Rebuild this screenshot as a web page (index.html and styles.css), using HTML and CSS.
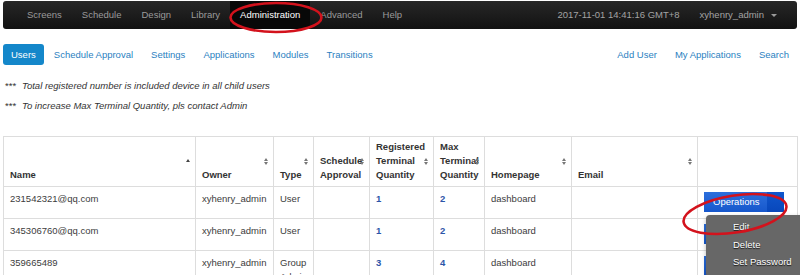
FILE: index.html
```html
<!DOCTYPE html>
<html>
<head>
<meta charset="utf-8">
<title>Users</title>
<link rel="stylesheet" href="styles.css">
</head>
<body>
<div class="page">
  <header class="navbar">
    <ul class="nav">
      <li><a>Screens</a></li>
      <li><a>Schedule</a></li>
      <li><a>Design</a></li>
      <li><a>Library</a></li>
      <li class="active"><a>Administration</a></li>
      <li><a>Advanced</a></li>
      <li><a>Help</a></li>
    </ul>
    <div class="nav-right">
      <span class="clock">2017-11-01 14:41:16 GMT+8</span>
      <a class="user">xyhenry_admin<b class="caret"></b></a>
    </div>
  </header>

  <nav class="subnav">
    <ul class="pills">
      <li class="active"><a>Users</a></li>
      <li><a>Schedule Approval</a></li>
      <li><a>Settings</a></li>
      <li><a>Applications</a></li>
      <li><a>Modules</a></li>
      <li><a>Transitions</a></li>
    </ul>
    <ul class="pills">
      <li><a>Add User</a></li>
      <li><a>My Applications</a></li>
      <li><a>Search</a></li>
    </ul>
  </nav>

  <div class="notes">
    <p><span class="stars">***</span><em>Total registered number is included device in all child users</em></p>
    <p><span class="stars">***</span><em>To increase Max Terminal Quantity, pls contact Admin</em></p>
  </div>

  <table class="grid">
    <colgroup>
      <col class="c-name"><col class="c-owner"><col class="c-type"><col class="c-appr">
      <col class="c-reg"><col class="c-max"><col class="c-home"><col class="c-email"><col class="c-ops">
    </colgroup>
    <thead>
      <tr>
        <th class="sort-asc">Name</th>
        <th class="sort">Owner</th>
        <th class="sort">Type</th>
        <th class="sort">Schedule Approval</th>
        <th class="sort">Registered Terminal Quantity</th>
        <th class="sort">Max Terminal Quantity</th>
        <th class="sort">Homepage</th>
        <th class="sort">Email</th>
        <th></th>
      </tr>
    </thead>
    <tbody>
      <tr>
        <td>231542321@qq.com</td>
        <td>xyhenry_admin</td>
        <td>User</td>
        <td></td>
        <td><a class="num">1</a></td>
        <td><a class="num">2</a></td>
        <td>dashboard</td>
        <td></td>
        <td class="ops">
          <div class="btn-group">
            <span class="btn">Operations</span><span class="btn btn-caret"></span>
            <ul class="menu">
              <li>Edit</li>
              <li>Delete</li>
              <li>Set Password</li>
            </ul>
          </div>
        </td>
      </tr>
      <tr>
        <td>345306760@qq.com</td>
        <td>xyhenry_admin</td>
        <td>User</td>
        <td></td>
        <td><a class="num">1</a></td>
        <td><a class="num">2</a></td>
        <td>dashboard</td>
        <td></td>
        <td class="ops"><div class="btn-group" aria-label="Operations"><span class="btn btn-blank"></span><span class="btn btn-caret"></span></div></td>
      </tr>
      <tr>
        <td>359665489</td>
        <td>xyhenry_admin</td>
        <td>Group Admin</td>
        <td></td>
        <td><a class="num">3</a></td>
        <td><a class="num">4</a></td>
        <td>dashboard</td>
        <td></td>
        <td class="ops"><div class="btn-group" aria-label="Operations"><span class="btn btn-blank"></span><span class="btn btn-caret"></span></div></td>
      </tr>
    </tbody>
  </table>
</div>

<svg class="marks" width="800" height="275" viewBox="0 0 800 275">
  <ellipse cx="276" cy="17.5" rx="45.5" ry="14.5" fill="none" stroke="#d3121c" stroke-width="2.6"/>
  <ellipse cx="735" cy="214" rx="52" ry="18.5" transform="rotate(-9 735 214)" fill="none" stroke="#d3121c" stroke-width="2.6"/>
</svg>
</body>
</html>
```

FILE: styles.css
```css
html, body {
  margin: 0;
  overflow: hidden;
  background: #fff;
}

body {
  font-family: "Liberation Sans", Arial, sans-serif;
  font-size: 9.5px;
  color: #333;
  position: relative;
}

.page {
  padding: 1px 3px 0;
}

/* top navbar */
.navbar {
  display: flex;
  justify-content: space-between;
  height: 28px;
  padding: 0 10px 0 14px;
  background: linear-gradient(#272727, #121212);
  border-radius: 3px;
}

.nav {
  display: flex;
  list-style: none;
  margin: 0;
  padding: 0;
}

.nav a {
  display: block;
  padding: 0 10px;
  line-height: 28px;
  color: #9a9a9a;
}

.nav .active a {
  background: #080808;
  color: #fff;
}

.nav-right {
  display: flex;
}

.clock,
.user {
  padding: 0 10px;
  line-height: 28px;
  color: #a3a3a3;
}

.caret {
  display: inline-block;
  margin-left: 7px;
  vertical-align: middle;
  border-top: 3px solid #9a9a9a;
  border-left: 3px solid transparent;
  border-right: 3px solid transparent;
}

/* sub navigation pills */
.subnav {
  display: flex;
  justify-content: space-between;
  margin-top: 15px;
}

.pills {
  display: flex;
  gap: 2px;
  list-style: none;
  margin: 0;
  padding: 0;
}

.pills a {
  display: block;
  padding: 0 8px;
  line-height: 21px;
  border-radius: 3px;
  color: #2b7fbf;
}

.pills .active a {
  background: #1487ca;
  color: #fff;
}

/* notes */
.notes {
  margin-top: 14px;
  display: flex;
  flex-direction: column;
  gap: 6px;
}

.notes p {
  margin: 0;
  line-height: 14px;
  color: #333;
}

.stars {
  display: inline-block;
  width: 17px;
  padding-left: 2px;
}

.notes em {
  font-style: italic;
}

/* table */
.grid {
  margin-top: 23px;
  width: 794px;
  table-layout: fixed;
  border-collapse: collapse;
  border: 1px solid #ddd;
}

.c-name { width: 192px; }
.c-owner { width: 78px; }
.c-type { width: 40px; }
.c-appr { width: 56px; }
.c-reg { width: 64px; }
.c-max { width: 51px; }
.c-home { width: 87px; }
.c-email { width: 126px; }
.c-ops { width: 100px; }

.grid th,
.grid td {
  border: 1px solid #ddd;
  text-align: left;
  line-height: 14px;
}

.grid th {
  position: relative;
  vertical-align: bottom;
  padding: 3px 6px 4px;
  font-weight: bold;
  color: #333;
}

.grid td {
  vertical-align: top;
  padding: 5px 6px 6px;
  color: #3c3c3c;
}

.grid th.sort::before,
.grid th.sort::after,
.grid th.sort-asc::before {
  content: "";
  position: absolute;
  right: 5px;
  border-left: 2.5px solid transparent;
  border-right: 2.5px solid transparent;
}

.grid th.sort::before,
.grid th.sort-asc::before {
  top: 50%;
  margin-top: -4px;
  border-bottom: 3px solid #777;
}

.grid th.sort::after {
  top: 50%;
  margin-top: 0;
  border-top: 3px solid #777;
}

.grid th.sort-asc::before {
  border-bottom-color: #444;
  margin-top: -3px;
}

.num {
  font-weight: bold;
  color: #2c55a8;
}

.grid td.ops {
  text-align: right;
  padding-right: 13px;
}

.btn-group {
  position: relative;
  display: inline-flex;
  height: 20px;
  vertical-align: top;
}

.btn {
  display: block;
  height: 20px;
  line-height: 20px;
  padding: 0 8px 0 9px;
  color: #fff;
  background: linear-gradient(#2c6fdc, #1657cc);
}

.btn-blank {
  width: 64px;
  padding: 0;
}

.btn-caret {
  width: 17px;
  padding: 0;
  background: linear-gradient(#1056cc, #0847bb);
}

.menu {
  position: absolute;
  top: 23px;
  left: 2px;
  z-index: 5;
  width: 112px;
  margin: 0;
  padding: 3px 0 6px;
  list-style: none;
  text-align: left;
  background: #676767;
  border-radius: 4px 0 0 4px;
  box-shadow: 0 2px 4px rgba(0, 0, 0, 0.3);
}

.menu li {
  padding: 0 8px 0 27px;
  line-height: 17.5px;
  color: #fff;
  text-shadow: 0 1px 1px #111;
  white-space: nowrap;
}

/* annotation overlay */
.marks {
  position: absolute;
  top: 0;
  left: 0;
  z-index: 20;
  pointer-events: none;
}
```
